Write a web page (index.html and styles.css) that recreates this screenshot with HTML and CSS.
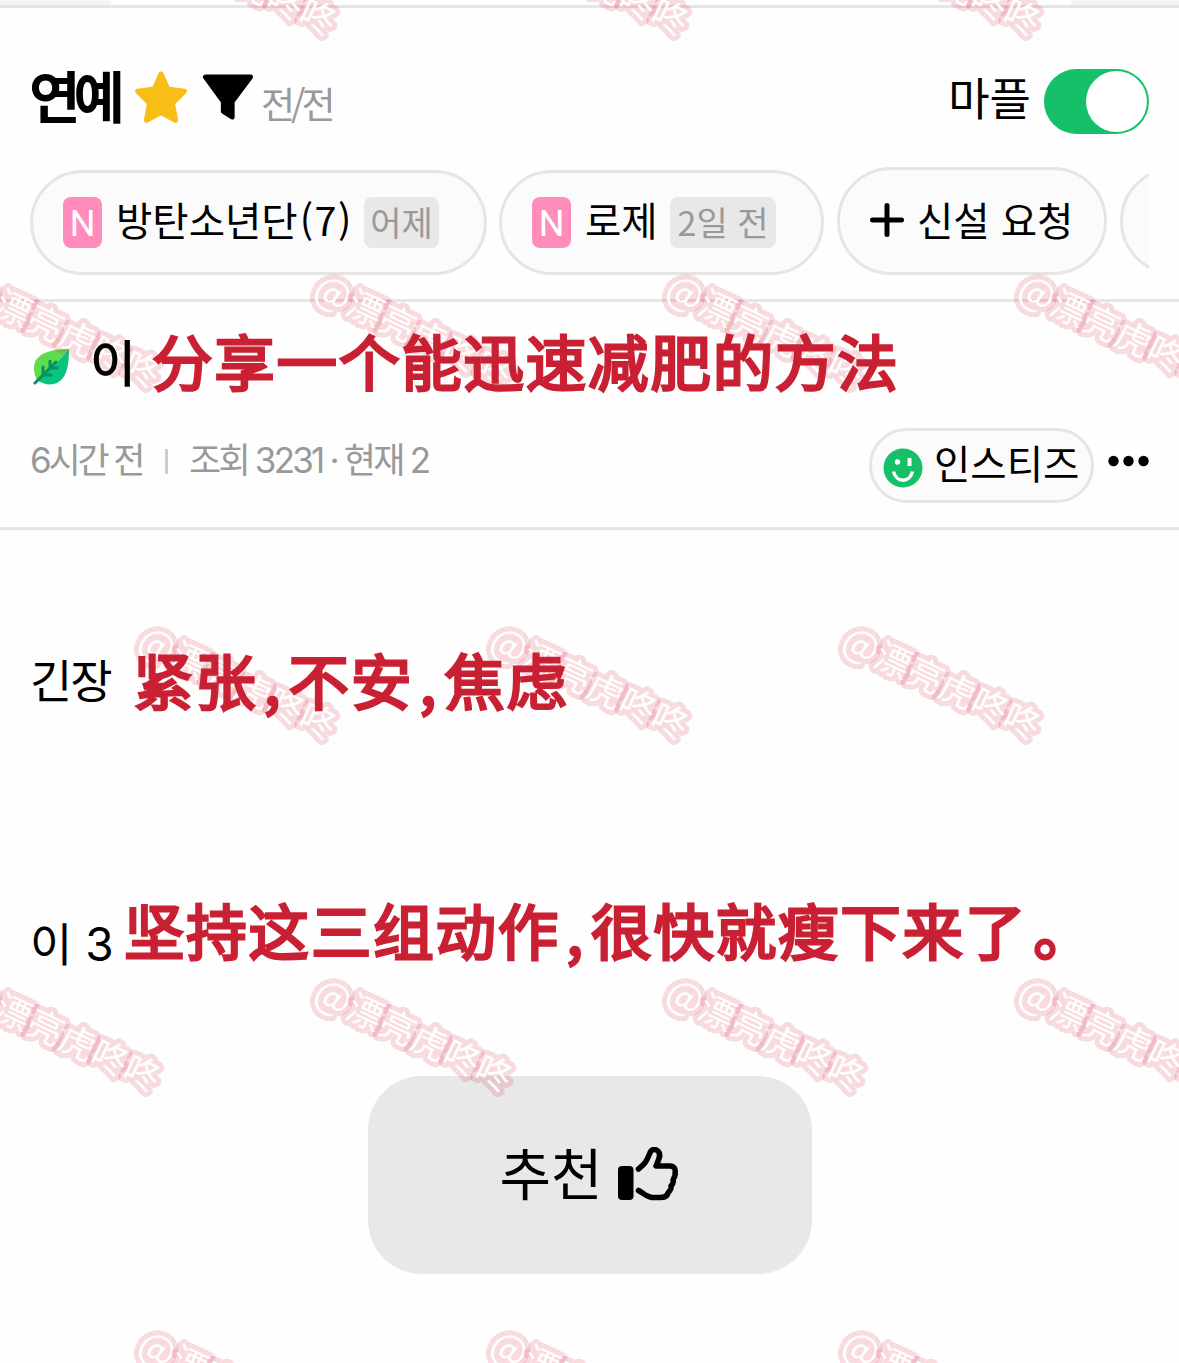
FILE: index.html
```html
<!DOCTYPE html>
<html lang="ko">
<head>
  <meta charset="UTF-8">
  <meta name="viewport" content="width=device-width, initial-scale=1.0">
  <title>연예</title>
  <link rel="stylesheet" href="styles.css">
</head>
<body>
  <div class="top-strip"><span class="tab-left"></span><span class="tab-right"></span></div>

  <header class="board">
    <div class="board-row">
      <h1>연예</h1>
      <svg class="star" viewBox="0 0 54 54"><path d="M27 4L33.5 18.5L49.5 20.5L38 32L41 48.5L27 41L13 48.5L16 32L4.500 20.500L20.500 18.500Z" fill="#f8bd16" stroke="#f8bd16" stroke-width="5" stroke-linejoin="round"/></svg>
      <svg class="funnel" viewBox="0 0 52 46"><path d="M4 3H48L30 27V42L21.500 36.500V27Z" stroke="#000" stroke-width="5" stroke-linejoin="round"/></svg>
      <span class="count">전/전</span>
      <span class="maple">마플</span>
      <span class="toggle"><span class="knob"></span></span>
    </div>
    <div class="chips">
      <a class="chip chip-bts"><b class="new">N</b><span class="name">방탄소년단<em>(7)</em></span><span class="date">어제</span></a>
      <a class="chip chip-rose"><b class="new">N</b><span class="name">로제</span><span class="date">2일 전</span></a>
      <a class="chip chip-add">
        <svg class="plus" viewBox="0 0 34 34"><path d="M17 2.500V31.500M2.500 17H31.500" stroke="#000" stroke-width="5" stroke-linecap="round"/></svg>
        <span class="name">신설 요청</span>
      </a>
      <a class="chip chip-next"></a>
    </div>
  </header>

  <section class="post-head">
    <div class="title">
      <svg class="leaf" viewBox="0 0 38 38">
        <path d="M36 1C24 1 7 3 2 14Q-1 23 4 32L21 18Z" fill="#5cdd4e"/>
        <path d="M36 1C36 17 34 30 24 35Q14 39 4 32L21 18Z" fill="#08c47d"/>
        <path d="M2 35L23 14M10 27V19M17 20V13M10 27H18M17 20H24" fill="none" stroke="#079063" stroke-width="3" stroke-linecap="round" stroke-linejoin="round"/>
      </svg>
      <h2>이</h2>
      <span class="zh" lang="zh-CN">分享一个能迅速减肥的方法</span>
    </div>
    <div class="meta">
      <span class="time">6시간 전</span>
      <i class="bar"></i>
      <span class="views">조회 3231 · 현재 2</span>
      <a class="site">
        <svg class="smile" viewBox="0 0 40 40">
          <circle cx="20" cy="20" r="19.500" fill="#16c069"/>
          <circle cx="14.500" cy="14" r="2.700" fill="#fff"/>
          <path d="M26.500 10V18" stroke="#fff" stroke-width="4"/>
          <path d="M10.500 23.500C13 35 27 35 29.500 23.500" fill="none" stroke="#fff" stroke-width="3.500"/>
        </svg>
        <span>인스티즈</span>
      </a>
      <svg class="more" viewBox="0 0 41 12"><circle cx="5.500" cy="6" r="5.200"/><circle cx="20.500" cy="6" r="5.200"/><circle cx="35.500" cy="6" r="5.200"/></svg>
    </div>
  </section>

  <main class="post">
    <p class="line line-1"><span class="ko">긴장</span><span class="zh" lang="zh-CN">紧张<i>,</i>不安<i>,</i>焦虑</span></p>
    <p class="line line-2"><span class="ko">이 <em>3</em></span><span class="zh" lang="zh-CN">坚持这三组动作<i>,</i>很快就瘦下来了<b>。</b></span></p>
    <button class="like">
      <span>추천</span>
      <svg class="thumb" viewBox="0 0 62 54">
        <rect x="0" y="19" width="15.500" height="34" rx="4"/>
        <path d="M20.500 22C28 16 29 13 31.500 7C33 2 37 1.500 40 4C44 8 40 14 38 19H51C56 18.500 58 22 57 26C58 29 56 30 55 33C56 36 54 38 53 39C54 43 51 44 50 46C49 50 46 50.500 42 50.500H34C29 50 25 46 20.500 43.500" fill="none" stroke="#000" stroke-width="5.500" stroke-linecap="round" stroke-linejoin="round"/>
      </svg>
    </button>
  </main>

  <svg class="watermark" viewBox="0 0 1179 1363" lang="zh-CN">
    <defs>
      <text id="mark" transform="rotate(25.2)" text-anchor="middle" y="12"><tspan class="at">@</tspan>漂亮虎咚咚</text>
    </defs>
    <use href="#mark" x="237" y="-20"/><use href="#mark" x="589" y="-20"/><use href="#mark" x="941" y="-20"/>
    <use href="#mark" x="61" y="332"/><use href="#mark" x="413" y="332"/><use href="#mark" x="765" y="332"/><use href="#mark" x="1117" y="332"/>
    <use href="#mark" x="237" y="684"/><use href="#mark" x="589" y="684"/><use href="#mark" x="941" y="684"/>
    <use href="#mark" x="61" y="1036"/><use href="#mark" x="413" y="1036"/><use href="#mark" x="765" y="1036"/><use href="#mark" x="1117" y="1036"/>
    <use href="#mark" x="237" y="1388"/><use href="#mark" x="589" y="1388"/><use href="#mark" x="941" y="1388"/>
  </svg>
</body>
</html>
```
FILE: styles.css
```css
* {
  box-sizing: border-box;
}
body {
  margin: 0;
  height: 1363px;
  overflow: hidden;
  position: relative;
  background: #fefefe;
  color: #000;
  font-family: "Noto Sans CJK KR", sans-serif;
}
h1, h2, p {
  margin: 0;
}
em {
  font-style: normal;
}
svg {
  flex: none;
}
span {
  white-space: nowrap;
}
.top-strip {
  display: flex;
  justify-content: space-between;
  height: 8px;
  border-bottom: 3px solid #e5e5e5;
}
.tab-left {
  width: 111px;
  background: #f4f4f4;
}
.tab-right {
  width: 108px;
  background: #f4f4f4;
}

/* board header */
.board {
  height: 294px;
  padding: 61px 30px 0;
  border-bottom: 3px solid #e5e5e5;
}
.board-row {
  display: flex;
  align-items: center;
  height: 65px;
}
h1 {
  width: 105px;
  margin: -15px 0 0 -1px;
  font-size: 56px;
  line-height: 60px;
  letter-spacing: -7px;
}
.star {
  width: 56px;
  height: 56px;
  margin: -8px 0 0 -1px;
}
.funnel {
  width: 54px;
  height: 47px;
  margin: -9px 0 0 12px;
}
.count {
  margin: 3px 0 0 6px;
  font-size: 37px;
  line-height: 40px;
  letter-spacing: -4px;
  color: #999;
}
.maple {
  margin: -9px 13px 0 auto;
  font-size: 45px;
  line-height: 50px;
}
.toggle {
  display: flex;
  justify-content: flex-end;
  width: 105px;
  height: 65px;
  padding: 2px;
  border-radius: 33px;
  background: #16c069;
}
.knob {
  width: 61px;
  height: 61px;
  border-radius: 50%;
  background: #fff;
}
.chips {
  display: flex;
  align-items: flex-end;
  height: 108px;
  margin-top: 33px;
  overflow: hidden;
}
.chip {
  display: flex;
  flex: none;
  align-items: flex-start;
  height: 105px;
  padding: 24px 30px 0;
  border: 3px solid #e5e5e5;
  border-radius: 54px;
  background: #fbfbfb;
}
.chip-bts {
  width: 457px;
}
.chip-rose {
  width: 325px;
  margin-left: 12px;
}
.chip-add {
  width: 270px;
  height: 108px;
  margin-left: 13px;
}
.chip-next {
  width: 270px;
  height: 108px;
  margin-left: 13px;
}
.new {
  width: 39px;
  height: 51px;
  border-radius: 8px;
  background: #ff8cba;
  color: #fff;
  font: 400 36px/54px Roboto, sans-serif;
  text-align: center;
}
.name {
  margin: -2px 0 0 14px;
  font-size: 39.5px;
  line-height: 48px;
}
.name em {
  margin-left: 2px;
  letter-spacing: 1.5px;
}
.chip-add .name {
  margin: 1px 0 0 13px;
}
.date {
  width: 75px;
  height: 51px;
  margin: 0 15px 0 auto;
  border-radius: 8px;
  background: #e8e8e8;
  color: #999;
  font-size: 34px;
  line-height: 50px;
  text-align: center;
}
.chip-rose .date {
  width: 106px;
}
.plus {
  width: 34px;
  height: 34px;
  margin-top: 9px;
}

/* post title and info */
.post-head {
  height: 228px;
  padding: 28px 30px 0;
  border-bottom: 3px solid #e5e5e5;
}
.title {
  display: flex;
  height: 98px;
}
.leaf {
  width: 38px;
  height: 38px;
  margin: 18px 0 0 3px;
}
h2 {
  position: relative;
  z-index: 2;
  width: 81px;
  padding-left: 19px;
  font-size: 50px;
  font-weight: 500;
  line-height: 60px;
}
.zh {
  position: relative;
  z-index: 2;
  color: #c92033;
  font-family: "Noto Sans CJK SC", sans-serif;
  font-size: 60.5px;
  font-weight: 400;
  line-height: 60px;
  letter-spacing: 1.8px;
  -webkit-text-stroke: 2.8px #c92033;
}
.zh i {
  display: inline-block;
  width: 31px;
  text-align: center;
  font-style: normal;
  line-height: 50px;
}
.zh b {
  margin-left: 6px;
  font-weight: 400;
}
.meta {
  display: flex;
  height: 75px;
  color: #999;
  font-family: Inter, "Noto Sans CJK KR", sans-serif;
  font-size: 35px;
  line-height: 64px;
  letter-spacing: -2.8px;
}
.time {
  width: 135px;
  letter-spacing: -3.2px;
}
.bar {
  width: 3px;
  height: 25px;
  margin: 21px 21px 0 0;
  background: #ccc;
}
.site {
  display: flex;
  width: 225px;
  height: 75px;
  margin-left: auto;
  padding: 0 0 0 11px;
  border: 3px solid #e5e5e5;
  border-radius: 38px;
  background: #fbfbfb;
  color: #000;
  font-family: "Noto Sans CJK KR", sans-serif;
  font-size: 39.5px;
  line-height: 62px;
  letter-spacing: 0;
}
.smile {
  width: 40px;
  height: 40px;
  margin: 17px 11px 0 0;
}
.more {
  width: 41px;
  height: 12px;
  margin: 27px 0 0 14px;
}

/* post body */
.post {
  display: flex;
  flex-direction: column;
  height: 833px;
  padding: 119px 30px 0;
}
.line {
  display: flex;
}
.line-1 {
  height: 250px;
}
.line-2 {
  height: 177px;
}
.ko {
  font-size: 46px;
  line-height: 58px;
  letter-spacing: -2px;
}
.ko em {
  margin-left: 4px;
  font-family: Inter, sans-serif;
}
.line-1 .ko {
  width: 103px;
}
.line-2 .ko {
  width: 94px;
  line-height: 84px;
}
.like {
  display: flex;
  align-self: center;
  width: 444px;
  height: 198px;
  padding: 64px 0 0 132px;
  border: 0;
  border-radius: 54px;
  background: #e8e8e8;
  color: #000;
  font: 400 56px/62px "Noto Sans CJK KR", sans-serif;
}
.thumb {
  width: 62px;
  height: 54px;
  margin: 7px 0 0 15px;
}

/* repeated mark over the page */
.watermark {
  position: absolute;
  z-index: 1;
  top: 0;
  left: 0;
  width: 1179px;
  height: 1363px;
  pointer-events: none;
}
.watermark text {
  font-family: "Noto Sans CJK SC", sans-serif;
  font-size: 35.5px;
  fill: #fff;
  stroke: rgba(210, 32, 50, 0.18);
  stroke-width: 10px;
  stroke-linejoin: round;
  paint-order: stroke;
}
.watermark .at {
  font-size: 38px;
}
```
